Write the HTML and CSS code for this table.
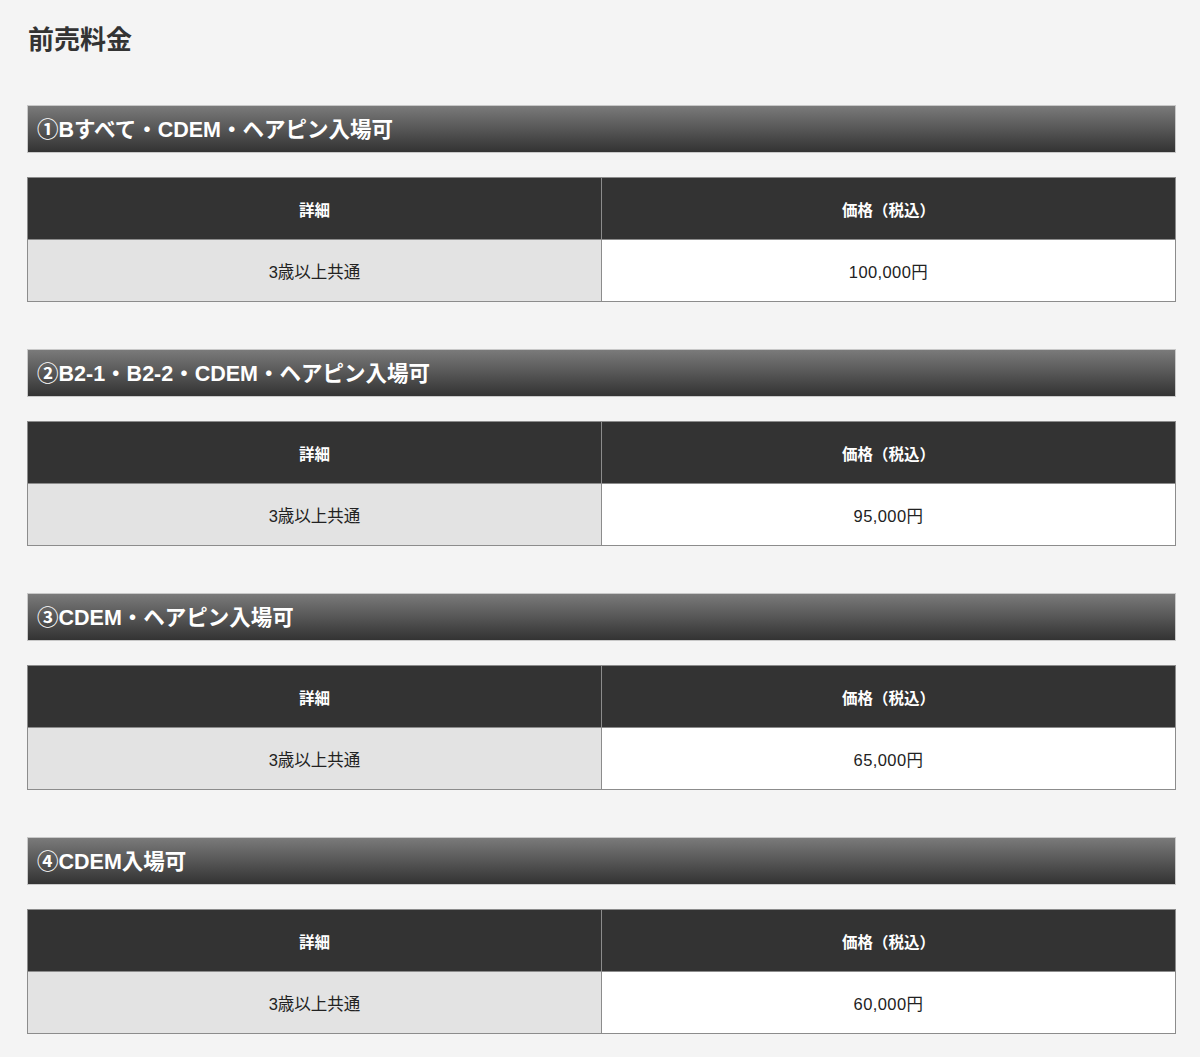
FILE: index.html
```html
<!DOCTYPE html>
<html lang="ja">
<head>
<meta charset="utf-8">
<title>前売料金</title>
<link rel="stylesheet" href="styles.css">
</head>
<body>
<main class="page">
  <h2 class="page-title">前売料金</h2>

  <section class="plan">
    <h3 class="plan-title">①Bすべて・CDEM・ヘアピン入場可</h3>
    <table class="price-table">
      <tr><th>詳細</th><th>価格（税込）</th></tr>
      <tr><td class="label">3歳以上共通</td><td class="price">100,000円</td></tr>
    </table>
  </section>

  <section class="plan">
    <h3 class="plan-title">②B2-1・B2-2・CDEM・ヘアピン入場可</h3>
    <table class="price-table">
      <tr><th>詳細</th><th>価格（税込）</th></tr>
      <tr><td class="label">3歳以上共通</td><td class="price">95,000円</td></tr>
    </table>
  </section>

  <section class="plan">
    <h3 class="plan-title">③CDEM・ヘアピン入場可</h3>
    <table class="price-table">
      <tr><th>詳細</th><th>価格（税込）</th></tr>
      <tr><td class="label">3歳以上共通</td><td class="price">65,000円</td></tr>
    </table>
  </section>

  <section class="plan">
    <h3 class="plan-title">④CDEM入場可</h3>
    <table class="price-table">
      <tr><th>詳細</th><th>価格（税込）</th></tr>
      <tr><td class="label">3歳以上共通</td><td class="price">60,000円</td></tr>
    </table>
  </section>
</main>
</body>
</html>
```

FILE: styles.css
```css
html, body {
  margin: 0;
  padding: 0;
  background: #f4f4f4;
}

body {
  font-family: "Liberation Sans", "Noto Sans CJK JP", sans-serif;
  color: #333;
}

.page {
  width: 1149px;
  padding: 20px 0 0 27px;
}

.page-title {
  margin: 0 0 49px 1px;
  font-family: "Noto Sans CJK JP", sans-serif;
  font-size: 26px;
  line-height: 36px;
  font-weight: 700;
  color: #333;
}

.plan {
  margin-bottom: 47px;
}

.plan-title {
  margin: 0 0 24px;
  height: 44px;
  box-sizing: content-box;
  border: 1px solid #c8c8c8;
  background: linear-gradient(to bottom, #7a7a7a 0%, #333 100%);
  color: #fff;
  font-size: 21.5px;
  line-height: 44px;
  font-weight: 700;
  padding: 2px 0 0 9px;
}

.price-table {
  width: 100%;
  border-collapse: collapse;
  table-layout: fixed;
  border: 1px solid #8c8c8c;
}

.price-table th,
.price-table td {
  height: 61px;
  padding: 0;
  text-align: center;
  vertical-align: middle;
  font-size: 16.5px;
  border: 1px solid #8c8c8c;
}

.price-table th {
  background: #333;
  color: #fff;
  font-weight: 700;
  font-size: 15.5px;
}

.price-table td.label {
  background: #e3e3e3;
  color: #222;
}

.price-table td.price {
  background: #fff;
  color: #222;
  letter-spacing: 0.4px;
}
```
